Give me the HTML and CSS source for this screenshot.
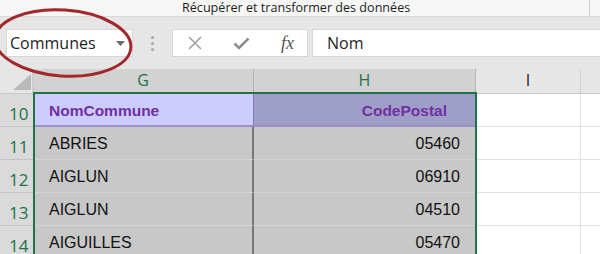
FILE: index.html
```html
<!DOCTYPE html>
<html>
<head>
<meta charset="utf-8">
<link rel="stylesheet" href="styles.css">
</head>
<body>
<div class="top">
  <span class="title">Récupérer et transformer des données</span>
  <span class="top-sep"></span>
</div>
<div class="fbar">
  <div class="namebox">
    <span>Communes</span>
    <svg class="arrow" width="9" height="5" viewBox="0 0 9 5"><path d="M0 0H9L4.5 5Z" fill="#6a6a6a"/></svg>
  </div>
  <div class="dots"><i></i><i></i><i></i></div>
  <div class="btns">
    <svg width="14" height="14" viewBox="0 0 14 14"><path d="M1 1L13 13M13 1L1 13" stroke="#a0a0a0" stroke-width="1.6" fill="none"/></svg>
    <svg width="17" height="13" viewBox="0 0 17 13"><path d="M1.5 6.5L6 11L15.5 1.5" stroke="#8e8e8e" stroke-width="2.6" fill="none"/></svg>
    <span class="fx">fx</span>
  </div>
  <div class="formula">Nom</div>
</div>
<div class="sheet">
  <div class="grid">
    <div class="corner"><svg width="33" height="25" viewBox="0 0 33 25"><path d="M13 21H31V5Z" fill="#b9b9b9"/></svg></div>
    <div class="ch sel">G</div>
    <div class="ch sel">H</div>
    <div class="ch">I</div>
    <div class="ch last"></div>

    <div class="rh">10</div>
    <div class="c hd g">NomCommune</div>
    <div class="c hd h">CodePostal</div>
    <div class="c w"></div>
    <div class="c w last"></div>

    <div class="rh">11</div>
    <div class="c d g">ABRIES</div>
    <div class="c d h">05460</div>
    <div class="c w"></div>
    <div class="c w last"></div>

    <div class="rh">12</div>
    <div class="c d g">AIGLUN</div>
    <div class="c d h">06910</div>
    <div class="c w"></div>
    <div class="c w last"></div>

    <div class="rh">13</div>
    <div class="c d g">AIGLUN</div>
    <div class="c d h">04510</div>
    <div class="c w"></div>
    <div class="c w last"></div>

    <div class="rh">14</div>
    <div class="c d g">AIGUILLES</div>
    <div class="c d h">05470</div>
    <div class="c w"></div>
    <div class="c w last"></div>
  </div>
  <div class="selection"></div>
</div>
<svg class="ring" width="600" height="254" viewBox="0 0 600 254">
  <ellipse cx="63" cy="43" rx="68" ry="33" transform="rotate(4 63 43)" fill="none" stroke="#a3282b" stroke-width="3"/>
</svg>
</body>
</html>
```
FILE: styles.css
```css
html, body {
  margin: 0;
  padding: 0;
}
body {
  width: 600px;
  height: 254px;
  overflow: hidden;
  position: relative;
  background: #ffffff;
  font-family: "Open Sans", "Noto Sans", sans-serif;
}
.top {
  height: 16px;
  background: #f6f6f6;
  border-bottom: 1px solid #d9d9d9;
  display: flex;
  align-items: center;
}
.title {
  padding-left: 182px;
  font-size: 12.6px;
  line-height: 16px;
  color: #1e1e1e;
  white-space: nowrap;
}
.top-sep {
  margin-left: auto;
  margin-right: 10px;
  width: 1px;
  height: 16px;
  background: #d2d2d2;
}
.fbar {
  height: 52px;
  box-sizing: border-box;
  background: #e6e6e6;
  padding: 12px 0 0 6px;
  display: flex;
  align-items: flex-start;
}
.namebox {
  width: 127px;
  height: 28px;
  box-sizing: border-box;
  background: #fff;
  border: 1px solid #d6d6d6;
  display: flex;
  align-items: center;
  padding: 0 7px 0 3px;
  font-size: 16px;
  color: #1e1e1e;
}
.namebox span { flex: 1; }
.arrow { margin-top: 1px; }
.dots {
  width: 39px;
  height: 28px;
  display: flex;
  flex-direction: column;
  align-items: center;
  justify-content: center;
  gap: 3px;
}
.dots i {
  width: 3px;
  height: 3px;
  border-radius: 50%;
  background: #a6a6a6;
}
.btns {
  width: 136px;
  height: 28px;
  box-sizing: border-box;
  background: #fff;
  border: 1px solid #d6d6d6;
  display: flex;
  align-items: center;
  padding-left: 15px;
  gap: 31px;
}
.fx {
  font-family: "Liberation Serif", "DejaVu Serif", serif;
  font-style: italic;
  font-size: 18px;
  color: #555;
  margin-left: 0;
}
.formula {
  flex: 1;
  margin-left: 4px;
  height: 28px;
  box-sizing: border-box;
  background: #fff;
  border: 1px solid #d6d6d6;
  border-right: none;
  padding-left: 14px;
  font-size: 16px;
  line-height: 26px;
  color: #1e1e1e;
}
.sheet {
  position: relative;
}
.grid {
  display: grid;
  grid-template-columns: 33px 221px 222px 105px 1fr;
  grid-template-rows: 25px repeat(5, 33px);
}
.corner {
  background: #e6e6e6;
  border-right: 1px solid #c8c8c8;
  border-bottom: 1px solid #c8c8c8;
}
.corner svg { display: block; }
.ch {
  background: #e6e6e6;
  border-right: 1px solid #cfcfcf;
  border-bottom: 1px solid #c8c8c8;
  display: flex;
  align-items: center;
  justify-content: center;
  padding-bottom: 2px;
  font-size: 16px;
  color: #222;
}
.ch.sel {
  background: #d2d2d2;
  color: #217346;
  border-right-color: #b4b4b4;
}
.ch.last { border-right: none; }
.rh {
  background: #dadada;
  border-bottom: 1px solid #c4c4c4;
  display: flex;
  align-items: flex-end;
  padding: 0 0 1px 9px;
  font-size: 17px;
  line-height: 22px;
  color: #217346;
}
.c {
  box-sizing: border-box;
  display: flex;
  align-items: flex-end;
  font-family: "Liberation Sans", Arial, sans-serif;
  font-size: 16px;
  line-height: 18px;
  padding-bottom: 6px;
  white-space: nowrap;
}
.hd {
  font-weight: bold;
  font-size: 15.5px;
  color: #7030a0;
  border-bottom: 2px solid #9d8fc7;
  padding-bottom: 5px;
}
.hd.g {
  background: #ccccff;
  border-right: 1px solid #8a78bf;
  padding-left: 16px;
}
.hd.h {
  background: #9f9ec8;
  justify-content: flex-end;
  padding-right: 29px;
}
.d {
  background: #c8c8c8;
  color: #111;
  border-bottom: 1px solid #d5d5d5;
}
.d.g {
  padding-left: 16px;
  border-right: 2px solid #777;
}
.d.h {
  justify-content: flex-end;
  padding-right: 16px;
}
.w {
  background: #fff;
  border-right: 1px solid #e1e1e1;
  border-bottom: 1px solid #e1e1e1;
}
.w.last { border-right: none; }
.selection {
  position: absolute;
  left: 33px;
  top: 23px;
  width: 444px;
  height: 200px;
  box-sizing: border-box;
  border: 2px solid #217346;
  border-bottom: none;
  pointer-events: none;
}
.ring {
  position: absolute;
  left: 0;
  top: 0;
  pointer-events: none;
}
```
